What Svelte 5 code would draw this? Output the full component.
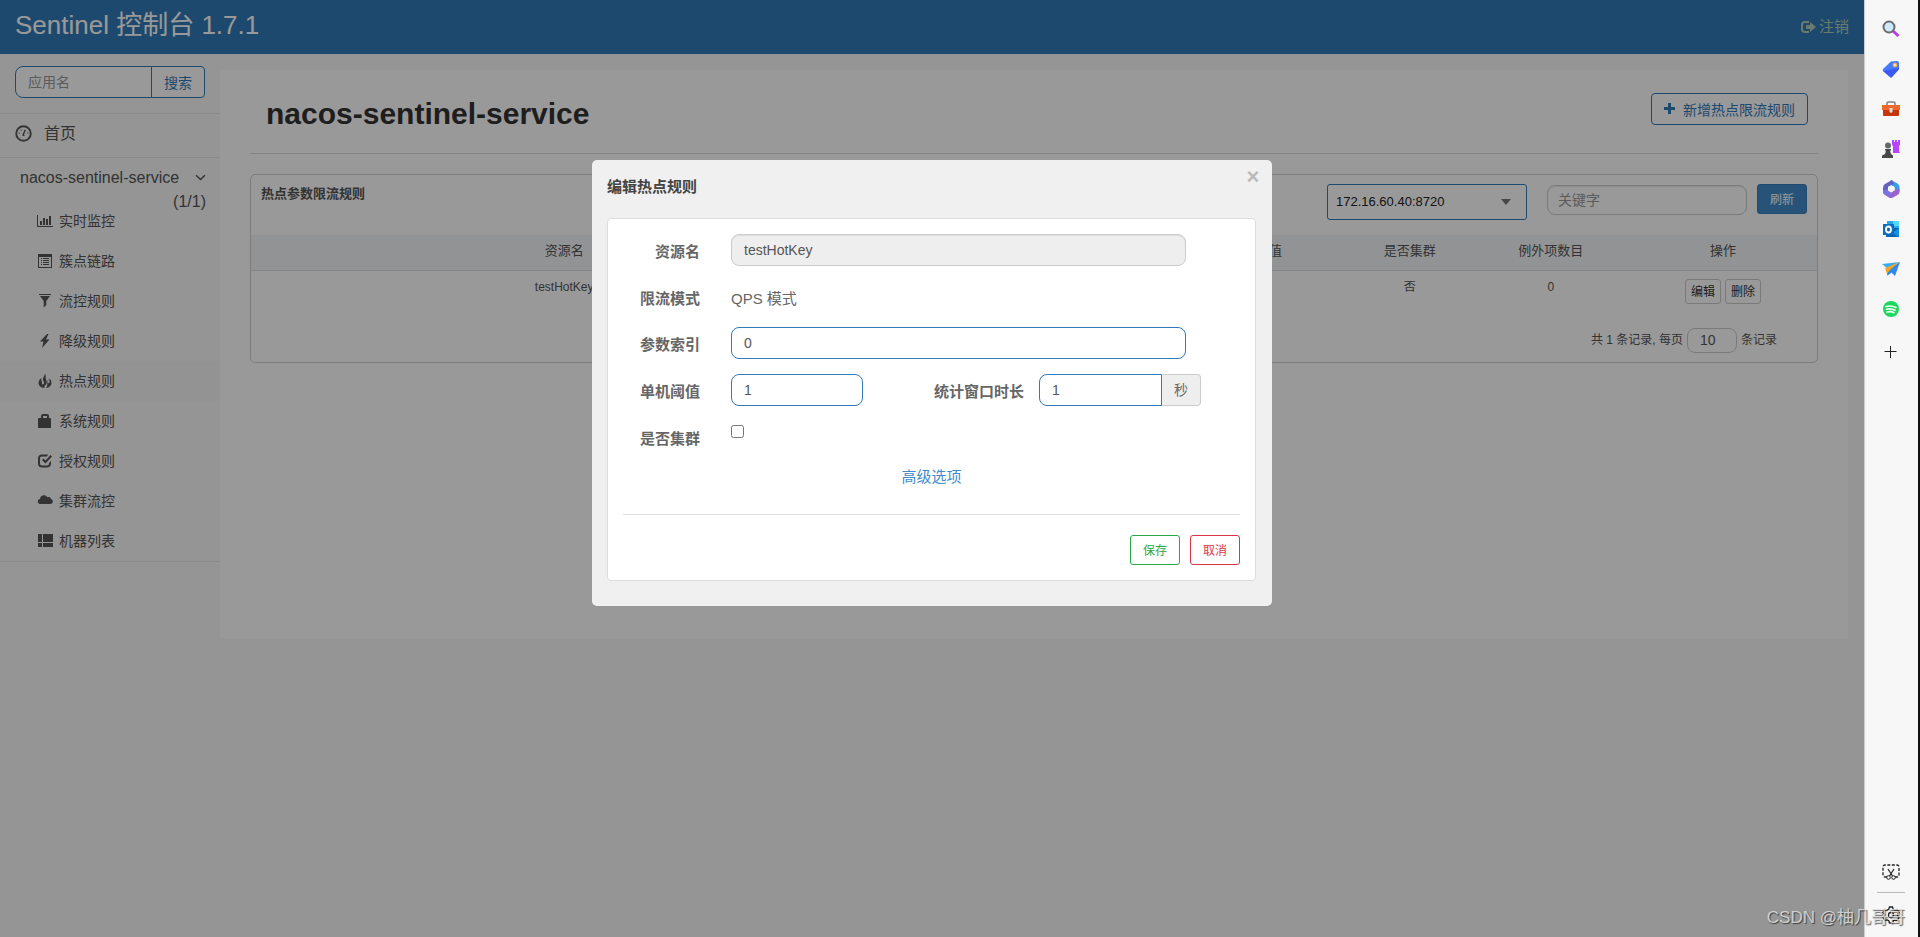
<script>
  // Sidebar menu
  const menu = [
    { icon: 'chart', name: '实时监控' },
    { icon: 'list', name: '簇点链路' },
    { icon: 'filter', name: '流控规则' },
    { icon: 'flash', name: '降级规则' },
    { icon: 'fire', name: '热点规则', active: true },
    { icon: 'lock', name: '系统规则' },
    { icon: 'check', name: '授权规则' },
    { icon: 'cloud', name: '集群流控' },
    { icon: 'machines', name: '机器列表' },
  ];

  const tools = ['search', 'tag', 'briefcase', 'games', 'office', 'outlook', 'drop', 'spotify', 'plus'];

  let rules = $state([{ resource: 'testHotKey', index: 0, mode: 'QPS', count: 1, cluster: false, items: 0 }]);
  let rule = $state({ resource: 'testHotKey', paramIdx: '0', count: '1', duration: '1', cluster: false });
  let keyword = $state('');
  let appName = $state('');
  let pageSize = $state('10');
  let showDialog = $state(true);

  // Close the edit dialog
  function closeDialog() {
    showDialog = false;
  }

  // Open the edit dialog
  function editRule(item) {
    rule.resource = item.resource;
    showDialog = true;
  }
</script>

{#snippet menuIcon(name)}
  <svg class="menu-icon" viewBox="0 0 16 16" fill="currentColor" aria-hidden="true">
    {#if name === 'chart'}
      <path d="M0 2h1v11h15v1H0zM3 8h2v4H3zM6 5h2v7H6zM9 6h2v6H9zM12 3h2v9h-2z" />
    {:else if name === 'list'}
      <path fill-rule="evenodd" d="M1 1h14v14H1zM2 4v10h12V4zM4 5h1v1H4zM6 5h6v1H6zM4 7h1v1H4zM6 7h6v1H6zM4 9h1v1H4zM6 9h6v1H6zM4 11h1v1H4zM6 11h6v1H6z" />
    {:else if name === 'filter'}
      <path d="M2 1h12v1H2zM3 3h10L9.300 8v4L6.700 14.500V8z" />
    {:else if name === 'flash'}
      <path d="M10 1L3 8.500h3.500L5 15 12.500 6.500H9L11.500 1z" />
    {:else if name === 'fire'}
      <path d="M8 .5C7.800 3 5.500 4.500 6 7c.3 1.500 1.800 2.500.8 4-.7.9-1.900.4-1.800-.8C5.100 8.500 3.700 7.500 4.500 5 2 6.500 1 9 1.800 11.500 2.500 13.500 5 15 7.500 15c-.5-1.400.5-2.500 1.500-3.500C10.500 9.500 9.500 7.500 8.800 6 8.200 4.500 9.500 3 8 .5zM11 3.500c.6 2 .2 4-.2 5.500-.3 1.500 1.400 1.800 1.700.5C12.700 8.500 12.300 7.500 12.500 5.500c2 2 2.500 4.500 1.500 6.500-.8 1.600-2.500 2.800-5 3 1.500-1.500 1.300-3 1.300-5 0-2 1.500-4 .7-6.500z" />
    {:else if name === 'lock'}
      <path fill-rule="evenodd" d="M1 6q0-1 1-1h2V3q0-2 2-2h4q2 0 2 2v2h1q1 0 1 1v9H1zM6 5h4V3H6z" />
    {:else if name === 'check'}
      <path d="M11 1.500H5C2.500 1.500 1 3 1 5.500v5C1 13 2.500 14.500 5 14.500h5c2.500 0 4-1.500 4-4V8l-2 2v.5c0 1.300-.7 2-2 2H5c-1.300 0-2-.7-2-2v-5c0-1.300.7-2 2-2h5zM5 7l1.500-1.500L8.500 7.500 13.500 2 15 3.500l-6.500 7z" />
    {:else if name === 'cloud'}
      <path d="M4 11C0 11-.2 6.500 3 6c.2-4 5.500-5 7.200-1.700C13 3.600 14 5 14 6c2.800.8 2.400 5-1 5z" />
    {:else}
      <path d="M1 1h4v8H1zM6 1h10v8H6zM1 10h4v4H1zM6 10h10v4H6z" />
    {/if}
  </svg>
{/snippet}

{#snippet toolIcon(name)}
  <svg class="tool-icon" viewBox="0 0 18 18" aria-hidden="true">
    {#if name === 'search'}
      <path d="M11 11l5.500 5" stroke="#b43cf0" stroke-width="3" />
      <circle cx="7" cy="7" r="5.500" fill="#cfeafa" stroke="#6c6c70" stroke-width="2" />
    {:else if name === 'tag'}
      <path d="M1 9l8-7.500 6-.5q2 0 2 2v6l-7 8q-1 1-2 0L1 11q-.7-1 0-2z" fill="#4778ff" />
      <path d="M1 11l16-3v1.500L10 17q-1 1-2 0z" fill="#344df0" opacity=".7" />
      <circle cx="13" cy="5" r="2" fill="#ffe09a" stroke="#e9ae2b" />
    {:else if name === 'briefcase'}
      <path d="M5 6V3.500Q5 2 7 2h4q2 0 2 1.500V6" fill="none" stroke="#85817e" stroke-width="1.500" />
      <path d="M0 5h18v5H0z" fill="#ee682d" />
      <path d="M1 10h16v5q0 1-1 1H2q-1 0-1-1z" fill="#c4370c" />
      <path d="M7.500 8h3v4l-1.500 1-1.500-1z" fill="#ddd" />
    {:else if name === 'games'}
      <path d="M10 0h2v2h1V0h2v2h1V0h2v5l-1 1v5l1 2h-7V6l-1-1z" fill="#b842ff" />
      <circle cx="6" cy="5.500" r="3" fill="#66666a" />
      <path d="M3 9h6v1.500H8L9 14l2 1.500V18H0v-2.500L3 14l1-3.500H3z" fill="#48484b" />
    {:else if name === 'office'}
      <path d="M9 0l6.500 3.500Q17.500 5 17.500 7v5L12.500 9.500V7L7 4z" fill="#389de3" />
      <path d="M10 0L3 4Q1 5 1 8v5l5-3V7l6-3.500z" fill="#6460c6" />
      <path d="M1 11l5-1 3 2.500 3.500-2.500 5-1v3q0 2-2 3l-4.500 2.500q-2 1-4 0L3 15q-2-1-2-3z" fill="#9b64ce" />
      <path d="M1 11q0 3 3 4l3 2 3-4-4-2.500V9z" fill="#7b73e2" />
      <path d="M9 5.500L12.500 7v3.500L9 12.500 6 10.500V7z" fill="#f7f7f7" />
    {:else if name === 'outlook'}
      <path d="M5 1h12v8H5z" fill="#28a8ea" />
      <path d="M11 1h6v5h-6z" fill="#50d9ff" />
      <path d="M4 8h13v9H4z" fill="#0a63b1" />
      <path d="M17 8v9l-7-4z" fill="#1490df" />
      <path d="M1 4h11v11H1z" fill="#0f6cbd" />
      <ellipse cx="6.500" cy="9.500" rx="2.500" ry="3" fill="none" stroke="#fff" stroke-width="1.800" />
    {:else if name === 'drop'}
      <path d="M0 4l18-2L5 8z" fill="#35adf0" />
      <path d="M18 2l-5 14-4-4-4 3V9z" fill="#3487ed" />
      <path d="M18 2L3 8l2 6 4-5z" fill="#f5a420" />
      <path d="M18 2L7 11l-2 5 4-3z" fill="#268be9" />
    {:else if name === 'spotify'}
      <circle cx="9" cy="9" r="8" fill="#1ed760" />
      <path d="M4 6.500q5-1.500 10 1M4.500 9.300q4.500-1.300 8.500 1M5 12q4-1 7 .7" fill="none" stroke="#f7fff9" stroke-width="1.600" stroke-linecap="round" />
    {:else if name === 'plus'}
      <path d="M8.500 3v12M2.500 8.500h12" stroke="#222" stroke-width="1" />
    {:else if name === 'snip'}
      <path d="M5 14H3q-2 0-2-2V4q0-2 2-2h12q2 0 2 2v8q0 2-2 2h-2" fill="none" stroke="#222" stroke-width="1.300" stroke-dasharray="3 1.500" />
      <path d="M6 6l4.500 7M12 6l-4.500 7" stroke="#222" stroke-width="1.200" />
      <circle cx="6.500" cy="14.500" r="1.800" fill="#f7f7f7" stroke="#222" />
      <circle cx="11.500" cy="14.500" r="1.800" fill="#f7f7f7" stroke="#222" />
    {:else}
      <path d="M7.500 1h3l.7 2.300 1.600.8L15 3.500l2 3-1.500 1.700v1.600L17 11.500l-2 3-2.200-.6-1.600.8-.7 2.300h-3l-.7-2.300-1.600-.8-2.200.6-2-3 1.500-1.700V8.200L1 6.500l2-3 2.200.6 1.600-.8z" fill="none" stroke="#222" stroke-width="1.300" />
      <circle cx="9" cy="9" r="2.500" fill="none" stroke="#222" stroke-width="1.300" />
    {/if}
  </svg>
{/snippet}

<div class="screen">
  <div class="app">
    <header class="navbar">
      <a class="brand" href="#/">Sentinel 控制台 1.7.1</a>
      <a class="logout" href="#/login">
        <svg viewBox="0 0 16 14" fill="currentColor" aria-hidden="true">
          <path d="M9 1H5Q1 1 1 5v4q0 4 4 4h4v-2H5q-2 0-2-2V5q0-2 2-2h4zM6 5h4V2l6 5-6 5V9H6z" />
        </svg>
        <span>注销</span>
      </a>
    </header>

    <div class="body">
      <aside class="sidebar">
        <form class="app-search">
          <input type="text" placeholder="应用名" aria-label="应用名" bind:value={appName} />
          <button type="button">搜索</button>
        </form>
        <a class="home" href="#/dashboard">
          <svg viewBox="0 0 18 18" fill="none" stroke="currentColor" aria-hidden="true">
            <circle cx="9" cy="9" r="7.700" stroke-width="2" />
            <path d="M8.500 10.500L11 5" stroke-width="1.500" />
            <path d="M4 8.500h1M6 5.500h1M13 8.500h1M8 11h2" stroke-width="1.300" />
          </svg>
          <span>首页</span>
        </a>
        <a class="service" href="#/service">
          <span class="service-name">
            nacos-sentinel-service
            <svg viewBox="0 0 10 10" fill="none" stroke="currentColor" stroke-width="1.300" aria-hidden="true">
              <path d="M1 2l4 4 4-4" />
            </svg>
          </span>
          <span class="service-count">(1/1)</span>
        </a>
        <ul class="menu">
          {#each menu as item (item.name)}
            <li>
              <a class="menu-link" class:active={item.active} href="#/{item.icon}">
                {@render menuIcon(item.icon)}
                <span>{item.name}</span>
              </a>
            </li>
          {/each}
        </ul>
      </aside>

      <main class="page">
        <div class="page-header">
          <h1>nacos-sentinel-service</h1>
          <button class="btn-add" type="button">
            <svg viewBox="0 0 12 12" fill="currentColor" aria-hidden="true"><path d="M4 0h3v4h4v3H7v4H4V7H0V4h4z" /></svg>
            <span>新增热点限流规则</span>
          </button>
        </div>

        <section class="card">
          <div class="card-header">
            <h2>热点参数限流规则</h2>
            <div class="select-box">
              <select aria-label="机器">
                <option>172.16.60.40:8720</option>
              </select>
            </div>
            <input class="keyword" type="text" placeholder="关键字" aria-label="关键字" bind:value={keyword} />
            <button class="btn-refresh" type="button">刷新</button>
          </div>
          <table>
            <thead>
              <tr>
                <th class="w40">资源名</th>
                <th class="w10">参数索引</th>
                <th class="w10">流控模式</th>
                <th class="w10">阈值</th>
                <th class="w8">是否集群</th>
                <th class="w10">例外项数目</th>
                <th class="w12">操作</th>
              </tr>
            </thead>
            <tbody>
              {#each rules as item (item.resource)}
                <tr>
                  <td>{item.resource}</td>
                  <td>{item.index}</td>
                  <td>{item.mode}</td>
                  <td>{item.count}</td>
                  <td>{item.cluster ? '是' : '否'}</td>
                  <td>{item.items}</td>
                  <td>
                    <div class="actions">
                      <button type="button" onclick={() => editRule(item)}>编辑</button>
                      <button type="button">删除</button>
                    </div>
                  </td>
                </tr>
              {/each}
            </tbody>
          </table>
          <div class="pagination">
            <span>共 {rules.length} 条记录, 每页</span>
            <input type="text" aria-label="每页记录数" bind:value={pageSize} />
            <span>条记录</span>
          </div>
        </section>
      </main>
    </div>

    {#if showDialog}
      <div class="overlay">
        <div class="dialog" role="dialog" aria-labelledby="dialog-title">
          <button class="close" type="button" aria-label="关闭" onclick={closeDialog}>×</button>
          <h3 id="dialog-title">编辑热点规则</h3>
          <form class="dialog-card">
            <div class="row">
              <label for="resource">资源名</label>
              <input id="resource" class="field wide" type="text" value={rule.resource} disabled />
            </div>
            <div class="row text-row">
              <span class="label">限流模式</span>
              <span class="static">QPS 模式</span>
            </div>
            <div class="row">
              <label for="param-idx">参数索引</label>
              <input id="param-idx" class="field wide" type="text" bind:value={rule.paramIdx} />
            </div>
            <div class="row">
              <label for="count">单机阈值</label>
              <input id="count" class="field short" type="text" bind:value={rule.count} />
              <label class="second" for="duration">统计窗口时长</label>
              <div class="input-group">
                <input id="duration" class="field" type="text" bind:value={rule.duration} />
                <span class="addon">秒</span>
              </div>
            </div>
            <div class="row">
              <label for="cluster">是否集群</label>
              <input id="cluster" class="tick" type="checkbox" bind:checked={rule.cluster} />
            </div>
            <div class="advanced"><a href="#/advanced">高级选项</a></div>
            <div class="dialog-footer">
              <button class="save" type="button" onclick={closeDialog}>保存</button>
              <button class="cancel" type="button" onclick={closeDialog}>取消</button>
            </div>
          </form>
        </div>
      </div>
    {/if}
  </div>

  <nav class="edge-bar">
    <div class="tools">
      {#each tools as tool (tool)}
        <button type="button" aria-label={tool}>{@render toolIcon(tool)}</button>
      {/each}
    </div>
    <div class="tools-bottom">
      <button type="button" aria-label="snip">{@render toolIcon('snip')}</button>
      <button type="button" aria-label="settings">{@render toolIcon('settings')}</button>
    </div>
  </nav>

  <div class="watermark">CSDN @柚几哥哥</div>
</div>

<style>
  :global(body) {
    margin: 0;
    background-color: #f8f8f8;
  }

  .screen,
  .screen :is(input, button, select) {
    font-family: 'Liberation Sans', 'Noto Sans CJK SC', sans-serif;
  }

  .screen,
  .screen * {
    box-sizing: border-box;
  }

  .screen {
    position: relative;
    display: flex;
    min-height: 100vh;
    font-size: 14px;
    line-height: 20px;
    color: #555;
  }

  a {
    text-decoration: none;
    color: inherit;
  }

  button {
    cursor: pointer;
  }

  .app {
    position: relative;
    flex: 1;
    min-width: 0;
    background-color: #f8f8f8;
  }

  .navbar {
    display: flex;
    justify-content: space-between;
    align-items: center;
    height: 54px;
    padding: 0 15px;
    background-color: #337ab7;
  }

  .brand {
    font-size: 26px;
    line-height: 32px;
    padding-bottom: 4px;
    color: #fff;
  }

  .logout {
    display: flex;
    align-items: center;
    gap: 3px;
    font-size: 15px;
    color: #b0cdb4;
  }

  .logout svg {
    width: 16px;
    height: 14px;
  }

  .body {
    display: flex;
    align-items: flex-start;
  }

  /* Sidebar */
  .sidebar {
    width: 220px;
    flex-shrink: 0;
    color: #555;
  }

  .app-search {
    display: flex;
    padding: 12px 15px 15px;
    border-bottom: 1px solid #e7e7e7;
  }

  .app-search input {
    flex: 1;
    min-width: 0;
    height: 32px;
    padding: 0 12px;
    font-size: 14px;
    background-color: #fff;
    border: 1px solid #337ab7;
    border-radius: 8px 0 0 8px;
  }

  .app-search button {
    width: 54px;
    height: 32px;
    margin-left: -1px;
    padding: 0;
    font-size: 14px;
    color: #337ab7;
    background-color: #fff;
    border: 1px solid #337ab7;
    border-radius: 0 4px 4px 0;
  }

  .home {
    display: flex;
    align-items: center;
    gap: 12px;
    height: 44px;
    padding: 0 15px 4px;
    font-size: 16px;
    border-bottom: 1px solid #e7e7e7;
  }

  .home svg {
    width: 17px;
    height: 17px;
  }

  .service {
    display: block;
    padding: 8px 14px 0 20px;
    font-size: 16px;
    line-height: 24px;
  }

  .service-name {
    display: flex;
    justify-content: space-between;
    align-items: center;
  }

  .service-name svg {
    width: 11px;
    height: 11px;
  }

  .service-count {
    display: block;
    text-align: right;
  }

  .menu {
    list-style: none;
    margin: -13px 0 0;
    padding: 0;
    border-bottom: 1px solid #e7e7e7;
  }

  .menu-link {
    display: flex;
    align-items: center;
    gap: 6px;
    height: 40px;
    padding-left: 37px;
  }

  .menu-link.active {
    background-color: #f6f6f6;
  }

  .menu-icon {
    width: 16px;
    height: 16px;
  }

  /* Page */
  .page {
    flex: 1;
    min-width: 0;
    min-height: 569px;
    margin: 16px 16px 0 0;
    padding: 0 30px;
    background-color: #fff;
  }

  .page-header {
    display: flex;
    justify-content: space-between;
    align-items: flex-start;
    height: 84px;
    padding: 23px 10px 0 16px;
    border-bottom: 1px solid #ddd;
  }

  h1 {
    margin: 0;
    font-size: 30px;
    line-height: 42px;
    color: #333;
  }

  .btn-add {
    display: flex;
    align-items: center;
    gap: 7px;
    height: 32px;
    padding: 0 12px;
    font-size: 14px;
    color: #337ab7;
    background-color: #fff;
    border: 1px solid #337ab7;
    border-radius: 4px;
  }

  .btn-add svg {
    width: 12px;
    height: 12px;
  }

  .card {
    margin-top: 20px;
    border: 1px solid #d0d0d0;
    border-radius: 5px;
  }

  .card-header {
    display: flex;
    align-items: flex-start;
    height: 60px;
    padding: 9px 10px 0;
  }

  h2 {
    flex: 1;
    margin: 0;
    font-size: 13px;
    line-height: 20px;
  }

  .select-box {
    position: relative;
    width: 200px;
    margin-right: 20px;
  }

  .select-box::after {
    content: '';
    position: absolute;
    top: 15px;
    right: 16px;
    border: 5px solid transparent;
    border-top: 6px solid #777;
    border-bottom: none;
    pointer-events: none;
  }

  .select-box select {
    appearance: none;
    width: 100%;
    height: 36px;
    padding: 0 8px 2px;
    font-size: 13px;
    color: #222;
    background-color: #fff;
    border: 1px solid #337ab7;
    border-radius: 3px;
  }

  .keyword {
    width: 200px;
    height: 30px;
    margin: 1px 10px 0 0;
    padding: 0 10px;
    font-size: 14px;
    background-color: #fff;
    border: 1px solid #ccc;
    border-radius: 8px;
    box-shadow: inset 0 1px 1px rgba(0, 0, 0, 0.075);
  }

  input::placeholder {
    color: #999;
  }

  .btn-refresh {
    width: 50px;
    height: 30px;
    padding: 0 0 2px;
    font-size: 12px;
    color: #fff;
    background-color: #428bca;
    border: 1px solid #357ebd;
    border-radius: 3px;
  }

  table {
    width: 100%;
    table-layout: fixed;
    border-collapse: collapse;
    text-align: center;
  }

  th {
    height: 35px;
    padding: 0 0 2px;
    font-size: 13px;
    font-weight: normal;
    background-color: #f3f5f7;
    border-bottom: 1px solid #ddd;
  }

  td {
    padding: 8px 0;
    font-size: 12px;
    line-height: 16px;
    vertical-align: top;
  }

  .w40 {
    width: 40%;
  }

  .w12 {
    width: 12%;
  }

  .w10 {
    width: 10%;
  }

  .w8 {
    width: 8%;
  }

  .actions {
    display: flex;
    justify-content: center;
    gap: 4px;
  }

  .actions button {
    width: 36px;
    height: 25px;
    padding: 0 0 2px;
    font-size: 12px;
    color: #333;
    background-color: #fff;
    border: 1px solid #ccc;
    border-radius: 3px;
  }

  .pagination {
    display: flex;
    justify-content: flex-end;
    align-items: center;
    gap: 4px;
    padding: 16px 40px 9px 0;
    font-size: 12px;
  }

  .pagination input {
    width: 50px;
    height: 25px;
    padding: 0 12px;
    font-size: 14px;
    color: #555;
    background-color: #fff;
    border: 1px solid #ccc;
    border-radius: 8px;
  }

  /* Dialog */
  .overlay {
    position: absolute;
    inset: 0;
    display: flex;
    justify-content: center;
    align-items: flex-start;
    padding-top: 160px;
    background-color: rgba(0, 0, 0, 0.4);
  }

  .dialog {
    position: relative;
    width: 680px;
    padding: 16px 16px 25px 15px;
    background-color: #f0f0f0;
    border-radius: 5px;
  }

  .close {
    position: absolute;
    top: 7px;
    right: 9px;
    width: 20px;
    height: 20px;
    padding: 0;
    font-size: 22px;
    font-weight: bold;
    line-height: 20px;
    color: #bbb;
    background: none;
    border: none;
  }

  h3 {
    margin: 0 0 20px;
    font-size: 15px;
    line-height: 22px;
    color: #444;
  }

  .dialog-card {
    padding: 15px;
    font-size: 15px;
    line-height: 22px;
    color: #666;
    background-color: #fff;
    border: 1px solid #ddd;
    border-radius: 4px;
  }

  .row {
    display: flex;
    align-items: flex-start;
    height: 32px;
    margin-bottom: 15px;
  }

  .row.text-row {
    height: 31px;
  }

  .row label,
  .row .label {
    width: 77px;
    margin-right: 31px;
    padding-top: 7px;
    font-weight: bold;
    text-align: right;
  }

  .row label.second {
    flex: 1;
    margin-right: 15px;
  }

  .static {
    padding-top: 7px;
  }

  .field {
    height: 32px;
    padding: 0 12px;
    font-size: 14px;
    color: #555;
    background-color: #fff;
    border: 1px solid #337ab7;
    border-radius: 8px;
  }

  .field:disabled {
    background-color: #eee;
    border-color: #ccc;
    box-shadow: inset 0 1px 1px rgba(0, 0, 0, 0.075);
  }

  .field.wide {
    flex: 1;
    margin-right: 54px;
  }

  .field.short {
    width: 132px;
  }

  .input-group {
    display: flex;
    width: 162px;
    margin-right: 39px;
  }

  .input-group .field {
    flex: 1;
    min-width: 0;
    border-radius: 8px 0 0 8px;
  }

  .addon {
    width: 39px;
    height: 32px;
    font-size: 14px;
    line-height: 30px;
    text-align: center;
    background-color: #eee;
    border: 1px solid #ccc;
    border-left: none;
    border-radius: 0 4px 4px 0;
  }

  .tick {
    width: 13px;
    height: 13px;
    margin: 4px 0 0;
  }

  .advanced {
    margin-top: -2px;
    padding-bottom: 26px;
    text-align: center;
    color: #428bca;
    border-bottom: 1px solid #e0e0e0;
  }

  .dialog-footer {
    display: flex;
    justify-content: flex-end;
    gap: 10px;
    padding-top: 20px;
  }

  .dialog-footer button {
    width: 50px;
    height: 30px;
    padding: 0 0 2px;
    font-size: 12px;
    background-color: #fff;
    border: 1px solid;
    border-radius: 3px;
  }

  .dialog-footer .save {
    color: #28a745;
  }

  .dialog-footer .cancel {
    color: #dc3545;
  }

  /* Browser side bar */
  .edge-bar {
    display: flex;
    flex-direction: column;
    justify-content: space-between;
    width: 56px;
    flex-shrink: 0;
    padding: 9px 1px 1px 0;
    background-color: #f7f7f7;
    border-left: 1px solid #ccc;
    border-right: 2px solid #111;
  }

  .tools,
  .tools-bottom {
    display: flex;
    flex-direction: column;
    align-items: center;
  }

  .edge-bar button {
    display: flex;
    align-items: center;
    justify-content: center;
    width: 40px;
    height: 40px;
    padding: 0;
    background: none;
    border: none;
  }

  .tools button:last-child {
    height: 46px;
  }

  .tools-bottom button:last-child {
    width: 28px;
    height: 44px;
    border-top: 1px solid #bbb;
  }

  .tool-icon {
    width: 18px;
    height: 18px;
  }

  .watermark {
    position: absolute;
    right: 15px;
    bottom: 8px;
    font-size: 17px;
    line-height: 22px;
    color: rgba(225, 225, 225, 0.85);
    text-shadow: 1px 1px 1px rgba(0, 0, 0, 0.6);
    pointer-events: none;
  }
</style>
